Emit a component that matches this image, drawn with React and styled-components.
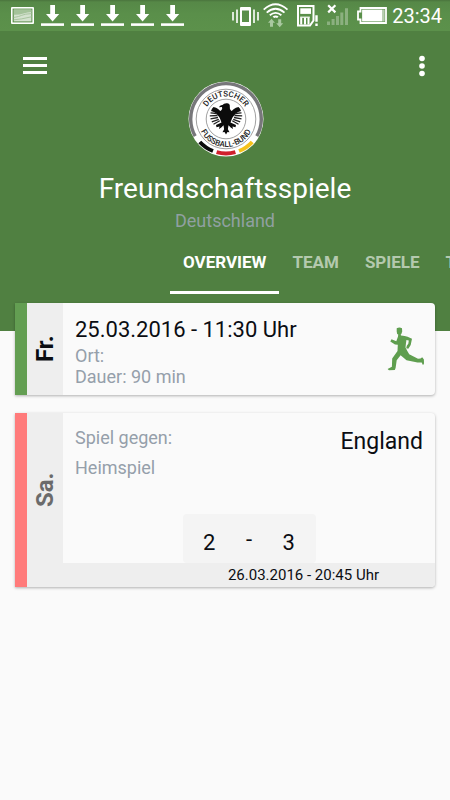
import React from "react";
import styled, { createGlobalStyle } from "styled-components";

const GlobalStyle = createGlobalStyle`
  *, *::before, *::after { box-sizing: border-box; }
  body {
    margin: 0;
    background: #fafafa;
    color: #0b0d12;
    font-family: Roboto, sans-serif;
  }
  svg { display: block; }
`;

const StatusBar = styled.div`
  display: flex;
  justify-content: space-between;
  align-items: center;
  height: 31px;
  padding: 0 8px 0 11px;
  background: linear-gradient(#4a743d 0, #568847 2px, #5a8f4a 14px, #5c914b 100%);
  color: #fff;
`;

const StatusGroup = styled.div`
  display: flex;
  align-items: center;
  gap: ${(p) => p.$gap}px;
`;

const Clock = styled.time`
  font-size: 20px;
  line-height: 32px;
`;

const Header = styled.header`
  background: #508041;
  color: #fff;
  padding-bottom: 37px;
`;

const Toolbar = styled.div`
  display: grid;
  grid-template-columns: 48px 1fr 48px;
  align-items: start;
  justify-items: center;
  padding: 11px 4px 0 11px;
`;

const IconButton = styled.button`
  display: grid;
  place-items: center;
  width: 48px;
  height: 48px;
  padding: 0;
  border: 0;
  background: none;
  color: #fff;
  cursor: pointer;
`;

const LogoBox = styled.div`
  padding-top: 39px;
  margin-right: 6px;
`;

const Title = styled.h1`
  margin: 15px 0 0;
  font-size: 28px;
  font-weight: 400;
  line-height: 34px;
  text-align: center;
`;

const Subtitle = styled.p`
  margin: 3px 0 0;
  color: #90a0a2;
  font-size: 18px;
  line-height: 24px;
  text-align: center;
`;

const Tabs = styled.nav`
  display: flex;
  margin-top: 1px;
  padding-left: 170px;
  overflow: hidden;
`;

const Tab = styled.a`
  flex: none;
  height: 60px;
  padding: 16px 13px 0;
  border-bottom: 3px solid ${(p) => (p.$active ? "#fff" : "transparent")};
  color: ${(p) => (p.$active ? "#fff" : "#b4c9ae")};
  font-size: 17px;
  font-weight: 700;
  line-height: 25px;
  text-decoration: none;
`;

const Cards = styled.main`
  display: flex;
  flex-direction: column;
  gap: 18px;
  margin-top: -28px;
  padding: 0 15px 24px;
`;

const Card = styled.article`
  display: flex;
  min-height: ${(p) => p.$minHeight}px;
  border-left: 12px solid ${(p) => p.$accent};
  border-radius: 0 4px 4px 0;
  background: #fafafa;
  box-shadow: 0 1px 3px rgba(0, 0, 0, 0.3);
  overflow: hidden;
`;

const Day = styled.div`
  flex: none;
  display: grid;
  place-items: center;
  width: 36px;
  background: #eee;
  color: ${(p) => p.$color};
  font-size: 24px;
  font-weight: 700;
  line-height: 36px;
  writing-mode: vertical-rl;
  transform: rotate(180deg);
  padding-top: ${(p) => p.$lift}px;
`;

const TrainingBody = styled.div`
  flex: 1;
  display: flex;
  justify-content: space-between;
  align-items: center;
  padding: 0 10px 0 12px;
`;

const TrainingText = styled.div`
  padding-top: 4px;
`;

const DateTime = styled.h2`
  margin: 0;
  font-size: 22px;
  font-weight: 400;
  line-height: 30px;
`;

const Detail = styled.p`
  margin: 0;
  color: #959faa;
  font-size: 18px;
  line-height: ${(p) => p.$line}px;
`;

const MatchBody = styled.div`
  flex: 1;
  display: flex;
  flex-direction: column;
`;

const MatchTop = styled.div`
  flex: 1;
  display: flex;
  justify-content: space-between;
  padding: 10px 12px 12px;
`;

const Opponent = styled.h2`
  margin: 3px 0 0;
  font-size: 23px;
  font-weight: 400;
  line-height: 32px;
`;

const Score = styled.div`
  align-self: center;
  display: grid;
  grid-template-columns: 1fr 26px 1fr;
  width: 133px;
  height: 49px;
  padding-top: 13px;
  border-radius: 4px;
  background: #f4f4f4;
  font-size: 22px;
  line-height: 32px;
  text-align: center;
`;

const Dash = styled.span`
  line-height: 26px;
`;

const MatchFooter = styled.footer`
  height: 24px;
  padding-right: 56px;
  background: #eee;
  font-size: 15px;
  line-height: 25px;
  text-align: right;
`;

const PictureIcon = () => (
  <svg width="23" height="31" viewBox="0 0 23 31" aria-hidden="true">
    <rect x="0" y="7" width="23" height="17" rx="1" fill="#fff" />
    <rect x="1.6" y="8.6" width="19.8" height="13.8" fill="#5a8f4a" />
    <rect x="2.8" y="9.6" width="17.6" height="11.8" fill="#d4e2cf" />
    <path d="M2.8 9.6h17.6v2.400q-4 .2-8 1.600t-9.600 1.200z" fill="#a4c39a" />
    <path d="M2.8 17.5q5-.8 8-2.200t9.600-1.700M2.8 19.800q7-.4 17.600-3" fill="none" stroke="#a9c5a0" />
  </svg>
);

const DownloadIcon = () => (
  <svg width="23" height="31" viewBox="0 0 23 31" fill="#fff" aria-hidden="true">
    <path d="M9.200 5h4.800v9h4.200L11.600 21.400 5 14h4.200z" />
    <rect x="0" y="23.3" width="23" height="2.6" />
  </svg>
);

const VibrateIcon = () => (
  <svg width="27" height="31" viewBox="0 0 27 31" aria-hidden="true">
    <path
      d="M9 7h9q1 0 1 1v17q0 1-1 1H9q-1 0-1-1V8q0-1 1-1zM10 10.500v11.500h7V10.500z"
      fill="#fff"
      fillRule="evenodd"
    />
    <path d="M5 9.500v13.500M22 9.500v13.500M1 12v8.500M26 12v8.500" stroke="#fff" strokeWidth="1.6" />
  </svg>
);

const WifiIcon = () => (
  <svg width="29" height="31" viewBox="0 0 29 31" aria-hidden="true">
    <g fill="none" stroke="#fff" strokeWidth="1.8">
      <path d="M.7 9.600q11.800-10.600 23.800 0M3.700 12.600q8.800-7.600 17.800 0M6.800 15.300q5.800-4.800 11.600 0" />
    </g>
    <path d="M9.600 16.600q3-2.300 6 0l-1.500 1.400q-1.500-1-3 0z" fill="#fff" />
    <path d="M8.500 18.800l3.500 4h-2v4H7v-4H5zM16.700 27.200l-3.500-4h2v-4h3v4h2z" fill="#a9c8a0" />
  </svg>
);

const SimIcon = () => (
  <svg width="24" height="31" viewBox="0 0 24 31" aria-hidden="true">
    <path d="M2 6h15.500v14.500L14 25.500H2z" fill="none" stroke="#fff" strokeWidth="2" />
    <rect x="4.3" y="8.3" width="10.700" height="5.600" fill="#fff" />
    <path d="M5.200 17.500v7M9 17.500v7M12.500 17.500v7" stroke="#fff" strokeWidth="2" />
    <path d="M4.200 17.200h9.600" stroke="#fff" strokeWidth="1.200" />
    <path d="M19.300 15.200h2.400v6.500h-2.400zM19.300 23.600h2.400v2.400h-2.400z" fill="#fff" />
  </svg>
);

const SignalIcon = () => (
  <svg width="28" height="31" viewBox="0 0 28 31" aria-hidden="true">
    <path
      d="M3 21.400h3V25H3zM7.600 19h3v6h-3zM12 16h3v9h-3zM16.300 12.600h3V25h-3zM21 8.300h3V25h-3z"
      fill="#8bb07f"
    />
    <path d="M4.200 5.200l7.200 7.200M11.400 5.200l-7.200 7.200" stroke="#fff" strokeWidth="2.200" />
  </svg>
);

const BatteryIcon = () => (
  <svg width="32" height="31" viewBox="0 0 32 31" aria-hidden="true">
    <path d="M4.500 8H30v15H4.500v-3.500H2v-8h2.500z" fill="none" stroke="#fff" strokeWidth="1.800" />
    <path d="M6.200 9.500h22.500v12H6.200z" fill="#b9cfb2" />
    <path d="M6.200 9.800h19.800v11.400H6.200z" fill="#fff" />
  </svg>
);

const MenuIcon = () => (
  <svg width="24" height="18" viewBox="0 0 24 18" fill="#fff" aria-hidden="true">
    <path d="M0 0h24v3H0zM0 7h24v3H0zM0 14h24v3H0z" />
  </svg>
);

const MoreIcon = () => (
  <svg width="6" height="22" viewBox="0 0 6 22" fill="#fff" aria-hidden="true">
    <circle cx="3" cy="3.500" r="2.800" />
    <circle cx="3" cy="11" r="2.800" />
    <circle cx="3" cy="18.500" r="2.800" />
  </svg>
);

const ClubLogo = () => (
  <svg width="76" height="76" viewBox="0 0 76 76" role="img" aria-label="Deutscher Fussball-Bund">
    <defs>
      <path id="logo-top" d="M15.500 38a22.500 22.500 0 0 1 45 0" />
      <path id="logo-bottom" d="M10 38a28 28 0 0 0 56 0" />
    </defs>
    <circle cx="38" cy="38" r="37.500" fill="#fff" />
    <path d="M7.200 55.200A35.300 35.300 0 1 1 68.800 55.200" fill="none" stroke="#77777a" strokeWidth="3.400" />
    <path d="M11.800 61a34.500 34.500 0 0 0 13.200 9" fill="none" stroke="#0a0a0a" strokeWidth="4" />
    <path d="M28.600 71.200a34.500 34.500 0 0 0 18.800 0" fill="none" stroke="#d0202d" strokeWidth="4" />
    <path d="M51 70a34.500 34.500 0 0 0 13.200-9" fill="none" stroke="#f6c21b" strokeWidth="4" />
    <circle cx="38" cy="38" r="29.800" fill="none" stroke="#888" strokeWidth="0.800" />
    <circle cx="38" cy="38" r="19.800" fill="none" stroke="#888" strokeWidth="0.800" />
    <g fill="#222" fontFamily="Roboto, sans-serif" fontSize="8" fontWeight="500" textAnchor="middle">
      <text>
        <textPath href="#logo-top" startOffset="50%">DEUTSCHER</textPath>
      </text>
      <text>
        <textPath href="#logo-bottom" startOffset="50%">FUSSBALL-BUND</textPath>
      </text>
    </g>
    <g fill="#0c0c0c">
      <path d="M34.500 24q1.200-2 4.500-1.800 3.200.4 2.800 3.200-.3 2.600 1.200 4.100l2.200 1.500-1 6-1.700 4.500 5.500 2.500-.5 2.200-3-.7.500 2.500-2.300-1.500-2.200-2.200-.6 4 1.600 3-2-.4-1.500 2.600-1.500-2.600-2 .4 1.600-3-.6-4-2.200 2.200-2.300 1.500.5-2.500-3 .7-.5-2.200 5.500-2.500-1.700-4.500-1-6 2.500-1.700q1.400-1.500.7-3.300l-3 .2q.6-1.600 3-2.200z" />
      <path d="M33 31.500q-2-4.500-7.500-5.500-1.800 1.600-2.500 4 4 .5 6 3.500l3.500 4z" />
      <path d="M43 31.500q2-4.500 7.500-5.500 1.800 1.600 2.500 4-4 .5-6 3.500l-3.500 4z" />
    </g>
    <path
      d="M29 32.500l-6.500-.7M29.500 34.500l-7.700.3M30 36.500l-7.500 1.300M30.800 38.300l-7 2.500M31.800 39.800l-6.300 3.400M47 32.500l6.500-.7M46.500 34.500l7.700.3M46 36.500l7.500 1.300M45.200 38.300l7 2.500M44.200 39.800l6.300 3.400"
      stroke="#222"
      strokeWidth="1.300"
    />
  </svg>
);

const RunnerIcon = () => (
  <svg width="38" height="44" viewBox="0 0 38 44" fill="#5f9e4f" role="img" aria-label="Training">
    <path d="M9.700 1.200Q12.400-.3 15 1.200L15.200 4.500Q14.600 7 13.700 7.500L14 8.600Q18 9 20.600 9.700L25 11.800 23.700 18 21.300 21.800 19.200 21.300 19.800 18.800 21.300 16.700 21.800 13.500 19.400 13Q18.800 17.500 18.500 20.500 20.200 24 22.200 27.200L31 31.800 33.500 31.600 35.200 30.300 36.900 32.500 37 36.500 36 38.300 34.700 35.600 30.500 35.400 19.500 33.200 13.600 28.200 9.700 33.300 8.600 41 7.800 43 2 43.200.6 42 4.900 39.800 5.200 31.500 10.500 24 10.800 17.800 8 17.400 3.300 14.400 4.500 12.300 9.300 14.200 11 9.400 11.200 7.500Q9.700 7 9.700 4.500z" />
  </svg>
);

const DOWNLOADS = ["a", "b", "c", "d", "e"];

const TABS = [
  { id: "overview", label: "OVERVIEW" },
  { id: "team", label: "TEAM" },
  { id: "spiele", label: "SPIELE" },
  { id: "tabelle", label: "TABELLE" },
];

export default function App() {
  return (
    <>
      <GlobalStyle />
      <StatusBar>
        <StatusGroup $gap={7}>
          <PictureIcon />
          {DOWNLOADS.map((id) => (
            <DownloadIcon key={id} />
          ))}
        </StatusGroup>
        <StatusGroup $gap={4}>
          <VibrateIcon />
          <WifiIcon />
          <SimIcon />
          <SignalIcon />
          <BatteryIcon />
          <Clock>23:34</Clock>
        </StatusGroup>
      </StatusBar>

      <Header>
        <Toolbar>
          <IconButton type="button" aria-label="Menü">
            <MenuIcon />
          </IconButton>
          <LogoBox>
            <ClubLogo />
          </LogoBox>
          <IconButton type="button" aria-label="Weitere Optionen">
            <MoreIcon />
          </IconButton>
        </Toolbar>
        <Title>Freundschaftsspiele</Title>
        <Subtitle>Deutschland</Subtitle>
        <Tabs>
          {TABS.map((tab, i) => (
            <Tab key={tab.id} href={`#${tab.id}`} $active={i === 0}>
              {tab.label}
            </Tab>
          ))}
        </Tabs>
      </Header>

      <Cards>
        <Card $accent="#639e52" $minHeight={92}>
          <Day $color="#0b0d12" $lift={0}>Fr.</Day>
          <TrainingBody>
            <TrainingText>
              <DateTime>25.03.2016 - 11:30 Uhr</DateTime>
              <Detail $line={21}>Ort:</Detail>
              <Detail $line={21}>Dauer: 90 min</Detail>
            </TrainingText>
            <RunnerIcon />
          </TrainingBody>
        </Card>

        <Card $accent="#ff7b7b" $minHeight={174}>
          <Day $color="#6b6b6b" $lift={20}>Sa.</Day>
          <MatchBody>
            <MatchTop>
              <div>
                <Detail $line={30}>Spiel gegen:</Detail>
                <Detail $line={30}>Heimspiel</Detail>
              </div>
              <Opponent>England</Opponent>
            </MatchTop>
            <Score>
              <span>2</span>
              <Dash>-</Dash>
              <span>3</span>
            </Score>
            <MatchFooter>26.03.2016 - 20:45 Uhr</MatchFooter>
          </MatchBody>
        </Card>
      </Cards>
    </>
  );
}
